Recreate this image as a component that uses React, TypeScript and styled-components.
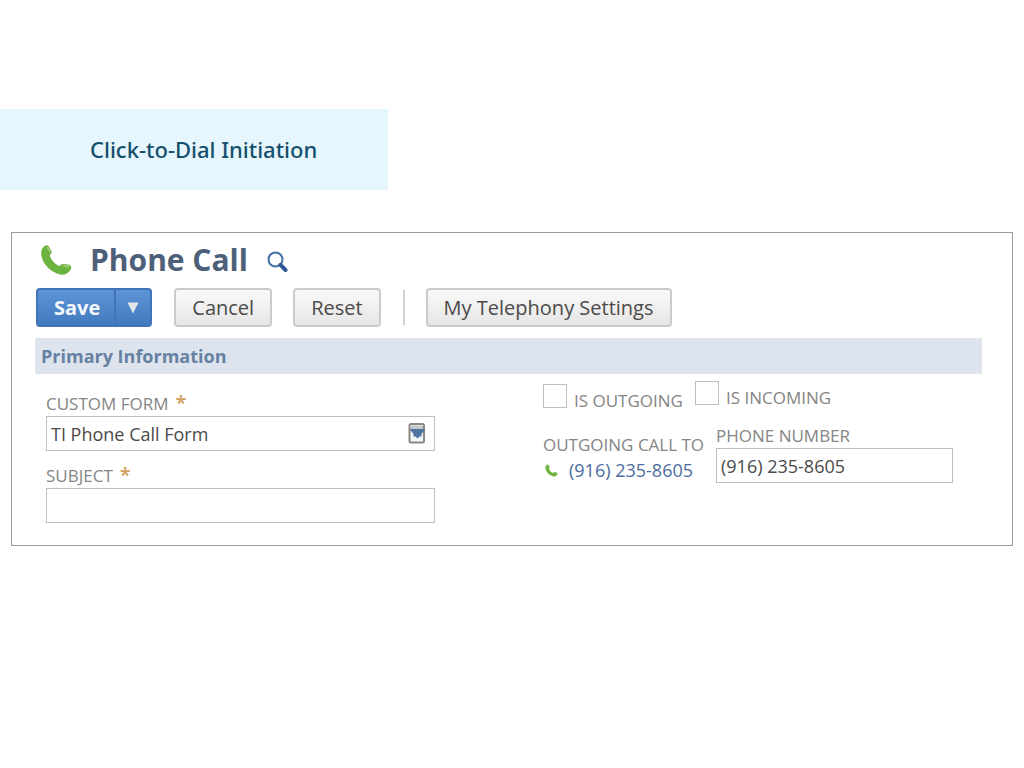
import React from "react";
import styled, { createGlobalStyle } from "styled-components";

const GlobalStyle = createGlobalStyle`
  * { box-sizing: border-box; }
  body {
    margin: 0;
    background: #fff;
    font-family: "Open Sans", "Noto Sans", sans-serif;
  }
  button, input, select { font-family: inherit; margin: 0; }
`;

const Page = styled.div`
  padding-top: 109px;
`;

const Banner = styled.header`
  display: flex;
  width: fit-content;
  padding: 25px 71px 26px 90px;
  background: #e6f6fe;
`;

const BannerTitle = styled.h1`
  margin: 0;
  font-family: "Noto Sans", "Open Sans", sans-serif;
  font-size: 22px;
  line-height: 30px;
  font-weight: 500;
  color: #14506c;
`;

const Panel = styled.main`
  margin: 42px 11px 0;
  padding: 6px 30px 9px 23px;
  border: 1px solid #9c9c9c;
`;

const TitleRow = styled.div`
  display: flex;
  align-items: center;
  height: 42px;
  padding-left: 5px;
`;

const Title = styled.h2`
  margin: 0 18px;
  font-size: 30px;
  line-height: 42px;
  font-weight: 700;
  color: #4d5f79;
`;

const IconButton = styled.button`
  display: flex;
  margin-top: 4px;
  padding: 0;
  border: 0;
  background: none;
`;

const Toolbar = styled.div`
  display: flex;
  align-items: center;
  flex-wrap: wrap;
  margin: 7px 0 11px 1px;
`;

const Button = styled.button`
  height: 39px;
  margin-right: 21px;
  padding: 0 16px;
  border: 2px solid #cbcbcb;
  border-radius: 4px;
  background: linear-gradient(#f9f9f9, #e6e6e6);
  font-size: 20px;
  line-height: 28px;
  color: #4a4a4a;
`;

const SplitButton = styled.div`
  display: flex;
  height: 39px;
  margin-right: 22px;
  border: 2px solid #4474b8;
  border-radius: 4px;
  background: linear-gradient(#5d94d6, #437abf);
`;

const SaveButton = styled.button`
  padding: 0 14px 0 16px;
  border: 0;
  border-right: 2px solid #4474b8;
  background: none;
  font-size: 20px;
  line-height: 28px;
  font-weight: 700;
  color: #f4f8fd;
`;

const SaveMenuButton = styled.button`
  display: flex;
  align-items: center;
  justify-content: center;
  width: 34px;
  padding: 0;
  border: 0;
  background: none;
`;

const Divider = styled.span`
  width: 2px;
  height: 35px;
  margin: 0 21px 0 1px;
  background: #d2d2d2;
`;

const SectionTitle = styled.h3`
  margin: 0;
  padding: 0 6px;
  background: #dee4ee;
  font-size: 18px;
  line-height: 36px;
  font-weight: 700;
  color: #6681a2;
`;

const Form = styled.form`
  display: grid;
  grid-template-columns: minmax(0, 389fr) minmax(0, 410fr);
  column-gap: 108px;
  padding: 0 29px 0 11px;
`;

const Column = styled.div`
  padding-top: 18px;
`;

const Field = styled.div`
  display: flex;
  flex-direction: column;
  margin-bottom: 13px;
`;

const FieldLabel = styled.label`
  font-size: 17px;
  line-height: 24px;
  color: #858585;
`;

const Required = styled.span`
  margin-left: 7px;
  font-size: 20px;
  line-height: 20px;
  font-weight: 600;
  color: #cf9a58;
`;

const TextInput = styled.input`
  width: 100%;
  height: 35px;
  padding: 0 4px;
  border: 1px solid #bebebe;
  background: #fff;
  font-size: 18px;
  line-height: 24px;
  color: #4a4a4a;
`;

const SelectBox = styled.div`
  position: relative;
  display: flex;
`;

const Select = styled.select`
  width: 100%;
  height: 35px;
  padding: 0 32px 0 4px;
  border: 1px solid #bebebe;
  border-radius: 0;
  appearance: none;
  background: #fff;
  font-size: 18px;
  line-height: 24px;
  color: #4a4a4a;
`;

const SelectMark = styled.svg`
  position: absolute;
  top: 6px;
  right: 8px;
  pointer-events: none;
`;

const CheckRow = styled.div`
  display: flex;
  align-items: flex-start;
  gap: 12px;
  padding-top: 7px;
`;

const CheckLabel = styled.label<{ $lowered?: boolean }>`
  display: flex;
  align-items: flex-end;
  gap: 7px;
  height: 29px;
  margin-top: ${(p) => (p.$lowered ? 3 : 0)}px;
  font-size: 17px;
  line-height: 24px;
  white-space: nowrap;
  color: #858585;
`;

const Checkbox = styled.input`
  appearance: none;
  align-self: flex-start;
  width: 24px;
  height: 24px;
  margin: 0;
  border: 1px solid #bebebe;
  background: #fff;
`;

const CallRow = styled.div`
  display: flex;
  margin-top: 11px;
`;

const CallTarget = styled.div`
  display: flex;
  flex: 0 0 173px;
  flex-direction: column;
  padding-top: 9px;
  white-space: nowrap;
`;

const Caption = styled.span`
  font-size: 17px;
  line-height: 24px;
  color: #858585;
`;

const PhoneLink = styled.a`
  display: flex;
  align-items: center;
  gap: 11px;
  padding-left: 2px;
  font-size: 18px;
  line-height: 26px;
  text-decoration: none;
  color: #4c6c9f;
`;

const NumberField = styled.div`
  display: flex;
  flex: 1;
  flex-direction: column;
  min-width: 0;
`;

function Handset({ size }: { size: number }) {
  return (
    <svg width={size} height={size} viewBox="0 0 32 32" aria-hidden="true">
      <path
        d="M4 2.5C5.500 0.800 7.500 0.700 8.700 2.200L11.300 6.800C12 8.200 11.600 9.700 9.800 11.100C10.600 15.500 14.800 20.200 19.500 22.300C20.800 20.500 22 19.700 23.700 20.100L29.200 20.800C31.200 21.300 31.700 23.500 30.600 25.500C28.500 29.500 24.500 31.500 20 30.500C10 28 1.500 19 1.200 9.500C1.100 6.500 2 4.200 4 2.500Z"
        fill="#6db33f"
      />
      <path d="M7.500 3L10.200 8M22.800 21.800L29.500 22.600" stroke="#9acb74" strokeWidth="2" fill="none" />
    </svg>
  );
}

export default function App() {
  return (
    <>
      <GlobalStyle />
      <Page>
        <Banner>
          <BannerTitle>Click-to-Dial Initiation</BannerTitle>
        </Banner>
        <Panel>
          <TitleRow>
            <Handset size={32} />
            <Title>Phone Call</Title>
            <IconButton type="button" aria-label="Search">
              <svg width="22" height="22" viewBox="0 0 22 22">
                <circle cx="9.500" cy="8.500" r="7" fill="none" stroke="#4370aa" strokeWidth="2" />
                <path d="M14.500 13.800L19.500 19" stroke="#2f5795" strokeWidth="4" strokeLinecap="round" />
              </svg>
            </IconButton>
          </TitleRow>
          <Toolbar>
            <SplitButton>
              <SaveButton type="submit" form="phone-call">Save</SaveButton>
              <SaveMenuButton type="button" aria-label="More save options">
                <svg width="12" height="12" viewBox="0 0 12 12">
                  <path d="M0.500 0.500H11.500L6 11.500Z" fill="#e3e6ea" />
                </svg>
              </SaveMenuButton>
            </SplitButton>
            <Button type="button">Cancel</Button>
            <Button type="reset" form="phone-call">Reset</Button>
            <Divider />
            <Button type="button">My Telephony Settings</Button>
          </Toolbar>
          <SectionTitle>Primary Information</SectionTitle>
          <Form id="phone-call" onSubmit={(e) => e.preventDefault()}>
            <Column>
              <Field>
                <FieldLabel htmlFor="custom-form">
                  CUSTOM FORM<Required>*</Required>
                </FieldLabel>
                <SelectBox>
                  <Select id="custom-form">
                    <option>TI Phone Call Form</option>
                  </Select>
                  <SelectMark width="20" height="22" viewBox="0 0 20 22" aria-hidden="true">
                    <rect x="2.500" y="2" width="14.500" height="18.500" rx="1.500" fill="#f3f6f8" stroke="#8b8781" strokeWidth="2" />
                    <path d="M3.500 3.500H16V7H3.500Z" fill="#c4c8ca" />
                    <path d="M2.500 7H18.500L14.500 12V14.500H12.500L10.500 16.500L8.500 14.500H6.500V12Z" fill="#4e759f" />
                  </SelectMark>
                </SelectBox>
              </Field>
              <Field>
                <FieldLabel htmlFor="subject">
                  SUBJECT<Required>*</Required>
                </FieldLabel>
                <TextInput id="subject" type="text" />
              </Field>
            </Column>
            <div>
              <CheckRow>
                <CheckLabel $lowered>
                  <Checkbox type="checkbox" />
                  IS OUTGOING
                </CheckLabel>
                <CheckLabel>
                  <Checkbox type="checkbox" />
                  IS INCOMING
                </CheckLabel>
              </CheckRow>
              <CallRow>
                <CallTarget>
                  <Caption>OUTGOING CALL TO</Caption>
                  <PhoneLink href="tel:+19162358605">
                    <Handset size={13} />
                    (916) 235-8605
                  </PhoneLink>
                </CallTarget>
                <NumberField>
                  <FieldLabel htmlFor="phone-number">PHONE NUMBER</FieldLabel>
                  <TextInput id="phone-number" type="tel" defaultValue="(916) 235-8605" />
                </NumberField>
              </CallRow>
            </div>
          </Form>
        </Panel>
      </Page>
    </>
  );
}
